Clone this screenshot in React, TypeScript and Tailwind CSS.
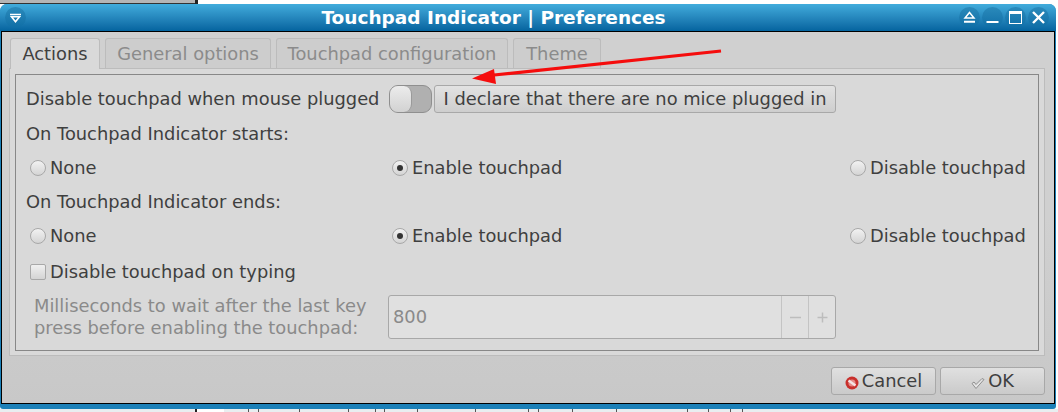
import React from "react";

const font = "font-['DejaVu_Sans',sans-serif]";

const TitleButton = ({ children }: { children: React.ReactNode }) => (
  <div className="w-[21px] h-[21px] rounded-full bg-gradient-to-b from-[#2a8abb] to-[#0e6ea6] flex items-center justify-center">
    <svg width="17" height="17" viewBox="0 0 17 17" fill="none" stroke="#fff">
      {children}
    </svg>
  </div>
);

const Radio = ({ checked, label, className }: { checked?: boolean; label: string; className?: string }) => (
  <div className={`flex items-center gap-[4px] ${className ?? ""}`}>
    <div className="w-[16px] h-[16px] rounded-full border border-[#a8a8a8] bg-gradient-to-b from-[#f2f2f2] to-[#d4d4d4] flex items-center justify-center">
      {checked && <div className="w-[6px] h-[6px] rounded-full bg-[#333]" />}
    </div>
    <span>{label}</span>
  </div>
);

const RadioRow = () => (
  <div className="grid grid-cols-[362px_458px_auto] h-[24px] pl-[4px] items-center">
    <Radio label="None" />
    <Radio checked label="Enable touchpad" />
    <Radio label="Disable touchpad" />
  </div>
);

const Tab = ({ label, active, className }: { label: string; active?: boolean; className: string }) => (
  <div
    className={`h-[30px] rounded-t-[3px] border border-b-0 flex items-center justify-center ${
      active ? "bg-[#d9d9d9] border-[#bcbcbc] text-[#3f3f3f] h-[31px] -mb-px relative" : "bg-[#cdcdcd] border-[#bcbcbc] text-[#8b8b8b]"
    } ${className}`}
  >
    {label}
  </div>
);

const ticks = [176, 202, 310, 438, 506, 530, 616, 768, 906, 930, 1018, 1134, 1318, 1374, 1430, 1460];

export default function App() {
  return (
    <div className={`w-[1058px] h-[412px] bg-white overflow-hidden relative flex flex-col text-[17.85px] leading-[20px] text-[#3f3f3f] ${font}`}>
      {/* what is behind the window */}
      <div className="h-[4px] flex shrink-0">
        <div className="w-[195px] bg-[#b5b5b5] border-b border-[#333]" />
        <div className="w-[3px] bg-[#222]" />
      </div>

      <div className="w-[1056px] h-[405px] shrink-0 flex flex-col bg-[#1b80b8] rounded-t-[7px] rounded-b-[3px] overflow-hidden">
        {/* title bar */}
        <div className="h-[27px] shrink-0 flex items-center bg-gradient-to-b from-[#41acdc] to-[#04649f] pl-[5px] pr-[7px]">
          <TitleButton>
            <path d="M3 5.5h11" strokeWidth="1.6" />
            <path d="M4.5 7.8h8l-4 5z" strokeWidth="1.6" />
          </TitleButton>
          <div className="flex-1 text-center text-white font-bold text-[18.5px] pl-[2px]">
            Touchpad Indicator | Preferences
          </div>
          <div className="flex gap-[2px]">
            <TitleButton>
              <path d="M8.5 3.5l4.5 5.5h-9z" strokeWidth="1.5" />
              <path d="M3 12.8h11" strokeWidth="2" />
            </TitleButton>
            <TitleButton>
              <path d="M2.5 13h12" strokeWidth="2.2" />
            </TitleButton>
            <TitleButton>
              <rect x="2.5" y="2.5" width="12" height="12" strokeWidth="1" />
              <path d="M2 4h13" strokeWidth="2" />
            </TitleButton>
            <TitleButton>
              <path d="M3 3l11 11M14 3l-11 11" strokeWidth="2.4" />
            </TitleButton>
          </div>
        </div>

        {/* window body */}
        <div className="h-[373px] shrink-0 mx-px border border-black bg-gradient-to-b from-[#d0d0d0] via-[#d0d0d0] to-[#c8c8c8] flex flex-col pl-[7px] pr-[9px] pt-[6px]">
          <div className="flex gap-[5px] ml-px">
            <Tab label="Actions" active className="w-[90px]" />
            <Tab label="General options" className="w-[166px]" />
            <Tab label="Touchpad configuration" className="w-[232px]" />
            <Tab label="Theme" className="w-[88px]" />
          </div>

          <div className="h-[288px] border border-[#bcbcbc] bg-[#d9d9d9] p-[5px] pb-[4px]">
            <div className="h-full border border-[#888] px-[10px] pt-[10px] flex flex-col">
              <div className="h-[28px] flex items-center">
                <span className="w-[363px] whitespace-nowrap">Disable touchpad when mouse plugged</span>
                <div className="w-[43px] h-[28px] rounded-[9px] border border-[#8f8f8f] bg-[#b0b0b0] relative">
                  <div className="absolute left-0 top-0 bottom-0 w-[22px] rounded-[8px] bg-gradient-to-b from-[#ececec] to-[#d2d2d2] border-r border-[#9a9a9a]" />
                </div>
                <div className="ml-[2px] w-[402px] h-[28px] rounded-[3px] border border-[#a8a8a8] bg-gradient-to-b from-[#e2e2e2] to-[#cecece] flex items-center justify-center whitespace-nowrap">
                  I declare that there are no mice plugged in
                </div>
              </div>

              <div className="mt-[11px] h-[20px]">On Touchpad Indicator starts:</div>
              <div className="mt-[12px]"><RadioRow /></div>
              <div className="mt-[12px] h-[20px]">On Touchpad Indicator ends:</div>
              <div className="mt-[12px]"><RadioRow /></div>

              <div className="mt-[12px] h-[24px] pl-[4px] flex items-center gap-[4px]">
                <div className="w-[16px] h-[16px] rounded-[2px] border border-[#a8a8a8] bg-gradient-to-b from-[#f0f0f0] to-[#d4d4d4]" />
                <span>Disable touchpad on typing</span>
              </div>

              <div className="mt-[11px] flex items-center">
                <div className="w-[354px] ml-[8px] text-[#8a8a8a] leading-[22px] whitespace-nowrap">
                  Milliseconds to wait after the last key
                  <br />
                  press before enabling the touchpad:
                </div>
                <div className="w-[448px] h-[44px] rounded-[3px] border border-[#a8a8a8] bg-[#e0e0e0] flex items-stretch text-[#8a8a8a]">
                  <div className="flex-1 flex items-center pl-[4px]">800</div>
                  <div className="w-[27px] border-l border-[#c4c4c4] flex items-center justify-center">
                    <svg width="13" height="13" viewBox="0 0 13 13" stroke="#bdbdbd" strokeWidth="1.5">
                      <path d="M1 6.5h11" />
                    </svg>
                  </div>
                  <div className="w-[27px] border-l border-[#c4c4c4] flex items-center justify-center">
                    <svg width="13" height="13" viewBox="0 0 13 13" stroke="#bdbdbd" strokeWidth="1.5">
                      <path d="M1.5 6.5h10M6.5 1.5v10" />
                    </svg>
                  </div>
                </div>
              </div>
            </div>
          </div>

          {/* dialog buttons */}
          <div className="mt-[11px] flex justify-end gap-[4px]">
            <div className="w-[105px] h-[28px] rounded-[3px] border border-[#a8a8a8] bg-gradient-to-b from-[#e0e0e0] to-[#cacaca] flex items-center justify-center gap-[3px]">
              <svg width="14" height="14" viewBox="0 0 14 14" className="mt-[3px]">
                <circle cx="7" cy="7" r="6.5" fill="#c8302c" />
                <circle cx="7" cy="7" r="3.6" fill="#e58a86" />
                <path d="M3.5 4.5l7 5" stroke="#f5e4e4" strokeWidth="2.4" />
              </svg>
              <span>Cancel</span>
            </div>
            <div className="w-[105px] h-[28px] rounded-[3px] border border-[#a8a8a8] bg-gradient-to-b from-[#e0e0e0] to-[#cacaca] flex items-center justify-center gap-[3px]">
              <svg width="14" height="14" viewBox="0 0 14 14" fill="none" className="mt-[3px]">
                <path d="M1 7.5l2-1.5 2 2.5 6-6 2 1-8 9z" stroke="#8f8f8f" fill="#e4e4e4" strokeWidth="1" />
              </svg>
              <span>OK</span>
            </div>
          </div>
        </div>
      </div>

      {/* what shows under the window */}
      <div className="h-[3px] bg-[#e8eef0] flex shrink-0 relative">
        <div className="ml-[195px] w-[2px] bg-[#222]" />
        <div className="w-[27px] bg-white" />
        {ticks.map((t) => (
          <div key={t} className="absolute top-0 bottom-0 w-px bg-[#555]" style={{ left: 180 + t / 2.6 }} />
        ))}
      </div>

      {/* annotation arrow drawn over the screenshot */}
      <svg className="absolute left-0 top-0 pointer-events-none" width="1058" height="412">
        <path d="M721 51 L494 75" stroke="#f50d0d" strokeWidth="3.2" fill="none" />
        <path d="M472 78.5 L494 69 L496 84 Z" fill="#f50d0d" />
      </svg>
    </div>
  );
}
